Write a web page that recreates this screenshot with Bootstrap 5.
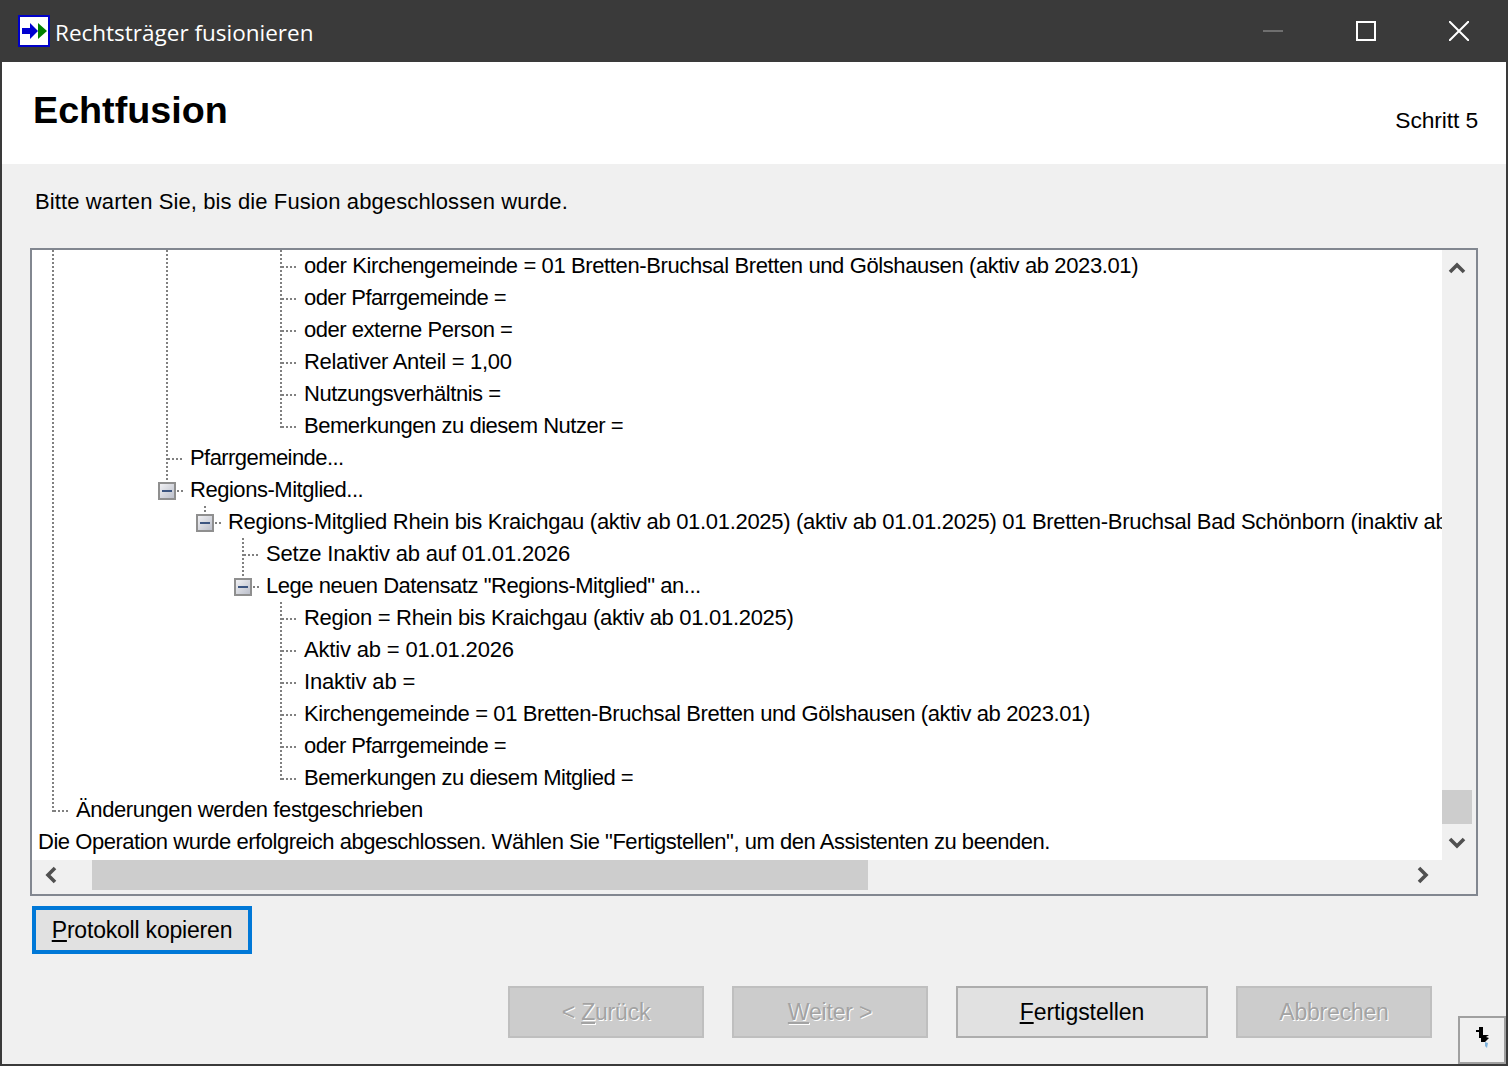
<!DOCTYPE html>
<html lang="de">
<head>
<meta charset="utf-8">
<title>Rechtsträger fusionieren</title>
<link href="https://cdn.jsdelivr.net/npm/bootstrap@5.3.0/dist/css/bootstrap.min.css" rel="stylesheet">
<style>
html,body{margin:0;height:1066px;overflow:hidden;background:#f0f0f0}
.wiz{width:1508px;height:1066px;background:#f0f0f0;border:2px solid #3a3a3a;border-top:0;font-family:"Liberation Sans",Arial,sans-serif;color:#000;font-size:23px;letter-spacing:-.1px}
.tbar{height:62px;margin:0 -2px;background:#3a3a3a;color:#fff;padding-left:18px;font-family:"Open Sans",sans-serif;font-size:22.5px;letter-spacing:0}
.tbar-title{margin-left:5px;margin-top:3px}
.wbtn{width:93px;height:62px;display:flex;align-items:center;justify-content:center}
.wbtns{padding-right:3px}
.hdr{height:102px;background:#fff;padding:0 28px 0 31px}
.hdr-title{font-size:37.7px;font-weight:700;letter-spacing:0;margin:26px 0 0}
.hdr-step{margin-top:41px;font-size:22.8px}
.intro{margin:25px 0 0 33px;height:59px;line-height:26px;font-size:22px;letter-spacing:.11px}
.treebox{width:1448px;height:650px;margin-left:28px;border:2px solid #828790;background:#f0f0f0}
.treeview{width:1410px;height:610px;background:#fff;overflow:hidden;font-size:22px;letter-spacing:-.47px}
.trow{height:32px;line-height:32px;padding-left:20px;white-space:nowrap;display:flex;align-items:stretch}
.cell{flex:none;width:38px;position:relative}
.cell.elb,.cell.exp{width:24px}
.vline::before,.hline::after,.elbv::before,.expv::before{content:"";position:absolute}
.vline::before{left:0;top:0;bottom:0;width:2px;background:repeating-linear-gradient(to bottom,#808080 0 2px,transparent 2px 4px)}
.elbv::before{left:0;top:0;height:18px;width:2px;background:repeating-linear-gradient(to bottom,#808080 0 2px,transparent 2px 4px)}
.hline::after{left:2px;top:16px;height:2px;width:16px;background:repeating-linear-gradient(to right,#808080 0 2px,transparent 2px 4px)}
.expv::before{left:0;top:0;height:8px;width:2px;background:repeating-linear-gradient(to bottom,#808080 0 2px,transparent 2px 4px)}
.expb{position:absolute;left:-8px;top:8px;width:18px;height:18px;display:block}
.exphl{position:absolute;left:11px;top:16px;width:6px;height:2px;background:repeating-linear-gradient(to right,#808080 0 2px,transparent 2px 4px)}
.ttext{flex:none}
.ls-a{letter-spacing:-.17px}
.ls-b{letter-spacing:-.3px}
.ls-c{letter-spacing:-.385px}
.ls-d{letter-spacing:-.57px}
.plain{padding-left:6px}
.hsb{height:34px;width:1444px;padding:0}
.vsb-inner{width:30px;height:610px}
.vgap1{height:540px;flex:none}
.vthumb{height:34px;background:#cdcdcd;flex:none}
.upchev{margin-top:7px}
.downchev{margin-top:7px}
.hthumb{width:776px;height:30px;background:#cdcdcd;flex:none}
.hleft{width:60px;height:30px;padding-left:6px;flex:none}
.hgap{width:575px;flex:none;height:30px}
.copybtn.btn,.wbtn-x.btn{border-radius:0;font-family:"Liberation Sans",Arial,sans-serif;font-size:23px;letter-spacing:-.2px;color:#000;padding:0;line-height:1}
.copybtn.btn{width:220px;height:48px;margin:10px 0 0 30px;background:#e1e1e1;border:4px solid #0078d7;display:block}
.actions{padding-left:506px;margin-top:32px}
.btnrow{column-gap:28px}
.wbtn-x.btn{width:196px;height:52px;background:#e1e1e1;border:2px solid #adadad}
.wbtn-x.btn.wide{width:252px;letter-spacing:-.05px}
.wbtn-x.btn:disabled{opacity:1;background:#cccccc;border-color:#bfbfbf;color:#a3a3a3;text-shadow:1px 1px 0 #fff}
.grip{width:48px;height:48px;margin:30px 0 0 26px;border:2px solid #a0a0a0;background:#f0f0f0;flex:none;display:flex;align-items:center;justify-content:center}
.gripicon{margin-bottom:6px;margin-left:4px}
</style>
</head>
<body>
<div class="wiz d-flex flex-column">
  <div class="tbar d-flex align-items-center">
    <svg width="32" height="32" viewBox="0 0 32 32"><rect x="1" y="1" width="30" height="30" fill="#fff" stroke="#0000c8" stroke-width="2"/><path d="M4 13h8V8l8 8-8 8v-5H4z" fill="#0000d0"/><path d="M20 8l9 8-9 8z" fill="#008000"/></svg>
    <span class="tbar-title">Rechtsträger fusionieren</span>
    <div class="wbtns ms-auto d-flex">
      <div class="wbtn"><svg width="20" height="2"><rect width="20" height="2" fill="#6f6f6f"/></svg></div>
      <div class="wbtn"><svg width="20" height="20"><rect x="1" y="1" width="18" height="18" fill="none" stroke="#fff" stroke-width="2"/></svg></div>
      <div class="wbtn"><svg width="20" height="20"><path d="M0 0L20 20M20 0L0 20" stroke="#fff" stroke-width="2"/></svg></div>
    </div>
  </div>
  <div class="hdr d-flex justify-content-between">
    <h1 class="hdr-title">Echtfusion</h1>
    <div class="hdr-step">Schritt 5</div>
  </div>
  <div class="intro">Bitte warten Sie, bis die Fusion abgeschlossen wurde.</div>
  <div class="treebox">
    <div class="d-flex">
      <div class="treeview">
        <div class="trow"><i class="cell vline"></i><i class="cell"></i><i class="cell"></i><i class="cell vline"></i><i class="cell"></i><i class="cell"></i><i class="cell elb vline hline"></i><span class="ttext ls-c">oder Kirchengemeinde = 01 Bretten-Bruchsal Bretten und Gölshausen (aktiv ab 2023.01)</span></div>
        <div class="trow"><i class="cell vline"></i><i class="cell"></i><i class="cell"></i><i class="cell vline"></i><i class="cell"></i><i class="cell"></i><i class="cell elb vline hline"></i><span class="ttext ls-d">oder Pfarrgemeinde =</span></div>
        <div class="trow"><i class="cell vline"></i><i class="cell"></i><i class="cell"></i><i class="cell vline"></i><i class="cell"></i><i class="cell"></i><i class="cell elb vline hline"></i><span class="ttext">oder externe Person =</span></div>
        <div class="trow"><i class="cell vline"></i><i class="cell"></i><i class="cell"></i><i class="cell vline"></i><i class="cell"></i><i class="cell"></i><i class="cell elb vline hline"></i><span class="ttext ls-b">Relativer Anteil = 1,00</span></div>
        <div class="trow"><i class="cell vline"></i><i class="cell"></i><i class="cell"></i><i class="cell vline"></i><i class="cell"></i><i class="cell"></i><i class="cell elb vline hline"></i><span class="ttext">Nutzungsverhältnis =</span></div>
        <div class="trow"><i class="cell vline"></i><i class="cell"></i><i class="cell"></i><i class="cell vline"></i><i class="cell"></i><i class="cell"></i><i class="cell elb elbv hline"></i><span class="ttext">Bemerkungen zu diesem Nutzer =</span></div>
        <div class="trow"><i class="cell vline"></i><i class="cell"></i><i class="cell"></i><i class="cell elb vline hline"></i><span class="ttext ls-d">Pfarrgemeinde...</span></div>
        <div class="trow"><i class="cell vline"></i><i class="cell"></i><i class="cell"></i><i class="cell exp expv"><svg class="expb" viewBox="0 0 18 18"><defs><linearGradient id="g" x1="0" y1="0" x2="1" y2="1"><stop offset="0" stop-color="#f4f4f6"/><stop offset="1" stop-color="#b8bcc8"/></linearGradient></defs><rect x="1" y="1" width="16" height="16" fill="url(#g)" stroke="#8f8f8f" stroke-width="2"/><rect x="4" y="8" width="10" height="2" fill="#3c5580"/></svg><b class="exphl"></b></i><span class="ttext">Regions-Mitglied...</span></div>
        <div class="trow"><i class="cell vline"></i><i class="cell"></i><i class="cell"></i><i class="cell"></i><i class="cell exp expv"><svg class="expb" viewBox="0 0 18 18"><rect x="1" y="1" width="16" height="16" fill="url(#g)" stroke="#8f8f8f" stroke-width="2"/><rect x="4" y="8" width="10" height="2" fill="#3c5580"/></svg><b class="exphl"></b></i><span class="ttext ls-b">Regions-Mitglied Rhein bis Kraichgau (aktiv ab 01.01.2025) (aktiv ab 01.01.2025) 01 Bretten-Bruchsal Bad Schönborn (inaktiv ab</span></div>
        <div class="trow"><i class="cell vline"></i><i class="cell"></i><i class="cell"></i><i class="cell"></i><i class="cell"></i><i class="cell elb vline hline"></i><span class="ttext ls-a">Setze Inaktiv ab auf 01.01.2026</span></div>
        <div class="trow"><i class="cell vline"></i><i class="cell"></i><i class="cell"></i><i class="cell"></i><i class="cell"></i><i class="cell exp expv"><svg class="expb" viewBox="0 0 18 18"><rect x="1" y="1" width="16" height="16" fill="url(#g)" stroke="#8f8f8f" stroke-width="2"/><rect x="4" y="8" width="10" height="2" fill="#3c5580"/></svg><b class="exphl"></b></i><span class="ttext">Lege neuen Datensatz "Regions-Mitglied" an...</span></div>
        <div class="trow"><i class="cell vline"></i><i class="cell"></i><i class="cell"></i><i class="cell"></i><i class="cell"></i><i class="cell"></i><i class="cell elb vline hline"></i><span class="ttext ls-b">Region = Rhein bis Kraichgau (aktiv ab 01.01.2025)</span></div>
        <div class="trow"><i class="cell vline"></i><i class="cell"></i><i class="cell"></i><i class="cell"></i><i class="cell"></i><i class="cell"></i><i class="cell elb vline hline"></i><span class="ttext ls-a">Aktiv ab = 01.01.2026</span></div>
        <div class="trow"><i class="cell vline"></i><i class="cell"></i><i class="cell"></i><i class="cell"></i><i class="cell"></i><i class="cell"></i><i class="cell elb vline hline"></i><span class="ttext ls-a">Inaktiv ab =</span></div>
        <div class="trow"><i class="cell vline"></i><i class="cell"></i><i class="cell"></i><i class="cell"></i><i class="cell"></i><i class="cell"></i><i class="cell elb vline hline"></i><span class="ttext ls-c">Kirchengemeinde = 01 Bretten-Bruchsal Bretten und Gölshausen (aktiv ab 2023.01)</span></div>
        <div class="trow"><i class="cell vline"></i><i class="cell"></i><i class="cell"></i><i class="cell"></i><i class="cell"></i><i class="cell"></i><i class="cell elb vline hline"></i><span class="ttext ls-d">oder Pfarrgemeinde =</span></div>
        <div class="trow"><i class="cell vline"></i><i class="cell"></i><i class="cell"></i><i class="cell"></i><i class="cell"></i><i class="cell"></i><i class="cell elb elbv hline"></i><span class="ttext">Bemerkungen zu diesem Mitglied =</span></div>
        <div class="trow"><i class="cell elb elbv hline"></i><span class="ttext ls-c">Änderungen werden festgeschrieben</span></div>
        <div class="trow plain px-0"><span class="ttext plain">Die Operation wurde erfolgreich abgeschlossen. Wählen Sie "Fertigstellen", um den Assistenten zu beenden.</span></div>
      </div>
      <div class="vsb-inner d-flex flex-column">
        <div class="vgap1 d-flex justify-content-center align-items-start"><svg class="upchev" width="18" height="22" viewBox="0 0 18 22"><path d="M2 15l7-7 7 7" fill="none" stroke="#505050" stroke-width="3.6"/></svg></div>
        <div class="vthumb"></div>
        <div class="d-flex justify-content-center"><svg class="downchev" width="18" height="22" viewBox="0 0 18 22"><path d="M2 8l7 7 7-7" fill="none" stroke="#505050" stroke-width="3.6"/></svg></div>
      </div>
    </div>
    <div class="hsb d-flex align-items-start">
      <div class="hleft d-flex align-items-center"><svg width="22" height="18" viewBox="0 0 22 18"><path d="M17 2l-7 7 7 7" fill="none" stroke="#505050" stroke-width="3.6"/></svg></div>
      <div class="hthumb"></div>
      <div class="hgap d-flex align-items-center justify-content-end"><svg class="me-2" width="22" height="18" viewBox="0 0 22 18"><path d="M6 2l7 7-7 7" fill="none" stroke="#505050" stroke-width="3.6"/></svg></div>
    </div>
  </div>
  <button type="button" class="btn copybtn"><u>P</u>rotokoll kopieren</button>
  <div class="actions d-flex align-items-start">
    <div class="btnrow d-flex align-items-start">
      <button type="button" class="btn wbtn-x" disabled>&lt; <u>Z</u>urück</button>
      <button type="button" class="btn wbtn-x" disabled><u>W</u>eiter &gt;</button>
      <button type="button" class="btn wbtn-x wide"><u>F</u>ertigstellen</button>
      <button type="button" class="btn wbtn-x" disabled>Abbrechen</button>
    </div>
    <div class="grip"><svg class="gripicon" width="16" height="22" viewBox="0 0 16 22"><path d="M9 16l3 1-1 5-2-2z" fill="#7fb2dc"/><path d="M3 1h4v8h6l-3 2 3 1-4 4H5v-4H3V6H0V4h3z" fill="#000"/></svg></div>
  </div>
</div>
</body>
</html>
